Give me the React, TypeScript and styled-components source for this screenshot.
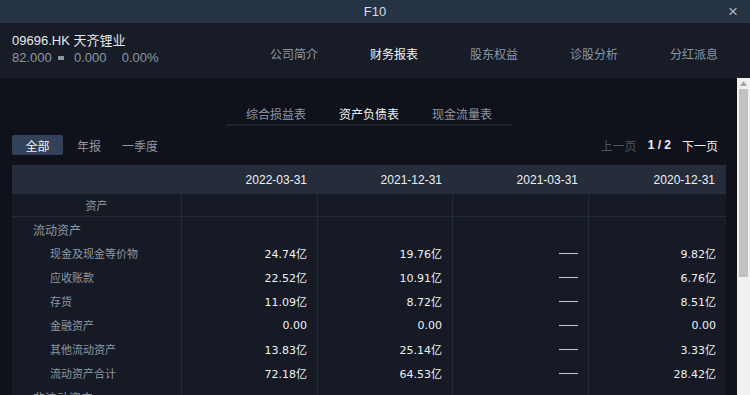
import React from "react";
import styled, { createGlobalStyle } from "styled-components";

const GlobalStyle = createGlobalStyle`
  html, body {
    margin: 0;
    padding: 0;
    background: #0f121a;
    overflow: hidden;
  }
  * { box-sizing: border-box; }
`;

const navTabs = ["公司简介", "财务报表", "股东权益", "诊股分析", "分红派息"];
const sheetTabs = ["综合损益表", "资产负债表", "现金流量表"];
const periods = ["全部", "年报", "一季度"];
const dates = ["2022-03-31", "2021-12-31", "2021-03-31", "2020-12-31"];

type Row = { label: string; level: number; values: (string | null)[] };

const rows: Row[] = [
  { label: "流动资产", level: 1, values: ["", "", "", ""] },
  { label: "现金及现金等价物", level: 2, values: ["24.74亿", "19.76亿", null, "9.82亿"] },
  { label: "应收账款", level: 2, values: ["22.52亿", "10.91亿", null, "6.76亿"] },
  { label: "存货", level: 2, values: ["11.09亿", "8.72亿", null, "8.51亿"] },
  { label: "金融资产", level: 2, values: ["0.00", "0.00", null, "0.00"] },
  { label: "其他流动资产", level: 2, values: ["13.83亿", "25.14亿", null, "3.33亿"] },
  { label: "流动资产合计", level: 2, values: ["72.18亿", "64.53亿", null, "28.42亿"] },
  { label: "非流动资产", level: 1, values: ["", "", "", ""] },
];

const App = () => {
  return (
    <Window>
      <GlobalStyle />
      <TitleBar>
        F10
        <Close>×</Close>
      </TitleBar>
      <Header>
        <Stock>
          <StockName>09696.HK 天齐锂业</StockName>
          <Price>
            82.000 <Flat /> 0.000 <Gap /> 0.00%
          </Price>
        </Stock>
        <Nav>
          {navTabs.map((t) => (
            <NavTab key={t} $active={t === "财务报表"}>
              {t}
            </NavTab>
          ))}
        </Nav>
      </Header>
      <Body>
        <Content>
          <SheetTabs>
            {sheetTabs.map((t) => (
              <SheetTab key={t} $active={t === "资产负债表"}>
                {t}
              </SheetTab>
            ))}
          </SheetTabs>
          <Toolbar>
            <Periods>
              {periods.map((p) => (
                <Period key={p} $active={p === "全部"}>
                  {p}
                </Period>
              ))}
            </Periods>
            <Pager>
              <PageLink $disabled>上一页</PageLink>
              <PageNum>1 / 2</PageNum>
              <PageLink>下一页</PageLink>
            </Pager>
          </Toolbar>
          <Table>
            <HeadRow>
              <HeadCell />
              {dates.map((d) => (
                <HeadCell key={d}>{d}</HeadCell>
              ))}
            </HeadRow>
            <SectionRow>
              <SectionCell>资产</SectionCell>
              {dates.map((d) => (
                <SectionCell key={d} />
              ))}
            </SectionRow>
            {rows.map((r) => (
              <DataRow key={r.label}>
                <LabelCell $level={r.level}>{r.label}</LabelCell>
                {r.values.map((v, i) => (
                  <ValueCell key={i}>{v === null ? <Dash /> : v}</ValueCell>
                ))}
              </DataRow>
            ))}
          </Table>
        </Content>
        <Scrollbar>
          <ScrollArrow>
            <svg width="7" height="5" viewBox="0 0 7 5">
              <path d="M0 5 L3.5 0 L7 5 Z" fill="#a3a3a3" />
            </svg>
          </ScrollArrow>
          <ScrollThumb />
        </Scrollbar>
      </Body>
    </Window>
  );
};

export default App;

const Window = styled.div`
  width: 750px;
  height: 395px;
  overflow: hidden;
  background: #0f121a;
  font-family: "Liberation Sans", "Noto Sans CJK SC", sans-serif;
  display: flex;
  flex-direction: column;
`;

const TitleBar = styled.div`
  position: relative;
  height: 23px;
  flex-shrink: 0;
  background: #253345;
  color: #d6dce4;
  font-size: 13px;
  display: flex;
  align-items: center;
  justify-content: center;
`;

const Close = styled.span`
  position: absolute;
  right: 12px;
  top: 2px;
  font-size: 17px;
  color: #a8b2bf;
`;

const Header = styled.div`
  height: 55px;
  flex-shrink: 0;
  background: #171c26;
  display: flex;
  align-items: center;
  padding-left: 12px;
`;

const Stock = styled.div`
  width: 258px;
  flex-shrink: 0;
  display: flex;
  flex-direction: column;
  gap: 1px;
  margin-top: -2px;
`;

const StockName = styled.div`
  color: #e6e9ee;
  font-size: 13px;
  line-height: 16px;
`;

const Price = styled.div`
  color: #8d97a4;
  font-size: 13px;
  line-height: 16px;
  display: flex;
  align-items: center;
  white-space: pre;
`;

const Flat = styled.span`
  display: inline-block;
  width: 6px;
  height: 4px;
  background: #8d97a4;
  margin: 0 6px 0 3px;
`;

const Gap = styled.span`
  display: inline-block;
  width: 8px;
`;

const Nav = styled.div`
  display: flex;
  flex-shrink: 0;
`;

const NavTab = styled.div<{ $active?: boolean }>`
  width: 100px;
  font-size: 12px;
  padding-top: 5px;
  white-space: nowrap;
  color: ${(p) => (p.$active ? "#f0f2f5" : "#8d97a4")};
  &:last-child { width: auto; }
`;

const Body = styled.div`
  flex: 1;
  display: flex;
  min-height: 0;
`;

const Content = styled.div`
  flex: 1;
  padding: 0 11px 0 12px;
  display: flex;
  flex-direction: column;
`;

const SheetTabs = styled.div`
  align-self: center;
  margin-top: 28px;
  width: 286px;
  height: 29px;
  display: flex;
  justify-content: center;
  gap: 33px;
  border-bottom: 2px solid #1d222d;
`;

const SheetTab = styled.div<{ $active?: boolean }>`
  font-size: 12px;
  line-height: 18px;
  color: ${(p) => (p.$active ? "#f0f2f5" : "#8d97a4")};
`;

const Toolbar = styled.div`
  margin-top: 9px;
  height: 20px;
  display: flex;
  align-items: center;
  justify-content: space-between;
`;

const Periods = styled.div`
  display: flex;
  align-items: center;
  gap: 14px;
`;

const Period = styled.div<{ $active?: boolean }>`
  height: 20px;
  padding: ${(p) => (p.$active ? "0 13px" : "0 7px 0 0")};
  min-width: ${(p) => (p.$active ? "51px" : "0")};
  display: flex;
  align-items: center;
  justify-content: center;
  border-radius: 2px;
  font-size: 12px;
  background: ${(p) => (p.$active ? "#334258" : "transparent")};
  color: ${(p) => (p.$active ? "#f0f2f5" : "#8d97a4")};
`;

const Pager = styled.div`
  display: flex;
  align-items: center;
  gap: 11px;
  padding-right: 8px;
  font-size: 12px;
`;

const PageLink = styled.span<{ $disabled?: boolean }>`
  color: ${(p) => (p.$disabled ? "#4d5663" : "#eef0f3")};
`;

const PageNum = styled.span`
  color: #eef0f3;
  font-weight: bold;
`;

const Table = styled.div`
  margin-top: 10px;
  display: flex;
  flex-direction: column;
  background: #161a24;
`;

const cols = "170px 136px 135px 136px 137px";

const HeadRow = styled.div`
  display: grid;
  grid-template-columns: ${cols};
  height: 29px;
  background: #252d3b;
`;

const HeadCell = styled.div`
  display: flex;
  align-items: center;
  justify-content: flex-end;
  padding-right: 11px;
  color: #eef0f3;
  font-size: 12px;
`;

const SectionRow = styled.div`
  display: grid;
  grid-template-columns: ${cols};
  height: 23px;
  border-bottom: 1px solid #222a37;
`;

const SectionCell = styled.div`
  display: flex;
  align-items: center;
  justify-content: center;
  font-size: 11px;
  color: #8d97a4;
  border-right: 1px solid #222a37;
  &:last-child { border-right: none; }
`;

const DataRow = styled.div`
  display: grid;
  grid-template-columns: ${cols};
  height: 24px;
`;

const LabelCell = styled.div<{ $level: number }>`
  display: flex;
  align-items: center;
  padding-left: ${(p) => (p.$level === 1 ? "21px" : "38px")};
  font-size: ${(p) => (p.$level === 1 ? "12px" : "11px")};
  color: #8d97a4;
  border-right: 1px solid #222a37;
`;

const ValueCell = styled.div`
  display: flex;
  align-items: center;
  justify-content: flex-end;
  padding-right: 10px;
  font-size: 11px;
  color: #eef0f3;
  font-family: "DejaVu Sans", "Noto Sans CJK SC", sans-serif;
  border-right: 1px solid #222a37;
  &:last-child { border-right: none; }
`;

const Dash = styled.span`
  display: inline-block;
  width: 19px;
  border-top: 1px solid #c8ccd2;
`;

const Scrollbar = styled.div`
  width: 13px;
  flex-shrink: 0;
  margin-right: 1px;
  background: #f0f0f0;
  display: flex;
  flex-direction: column;
  align-items: center;
`;

const ScrollArrow = styled.div`
  height: 11px;
  display: flex;
  align-items: center;
  justify-content: center;
`;

const ScrollThumb = styled.div`
  width: 9px;
  height: 188px;
  background: #c1c1c1;
`;
